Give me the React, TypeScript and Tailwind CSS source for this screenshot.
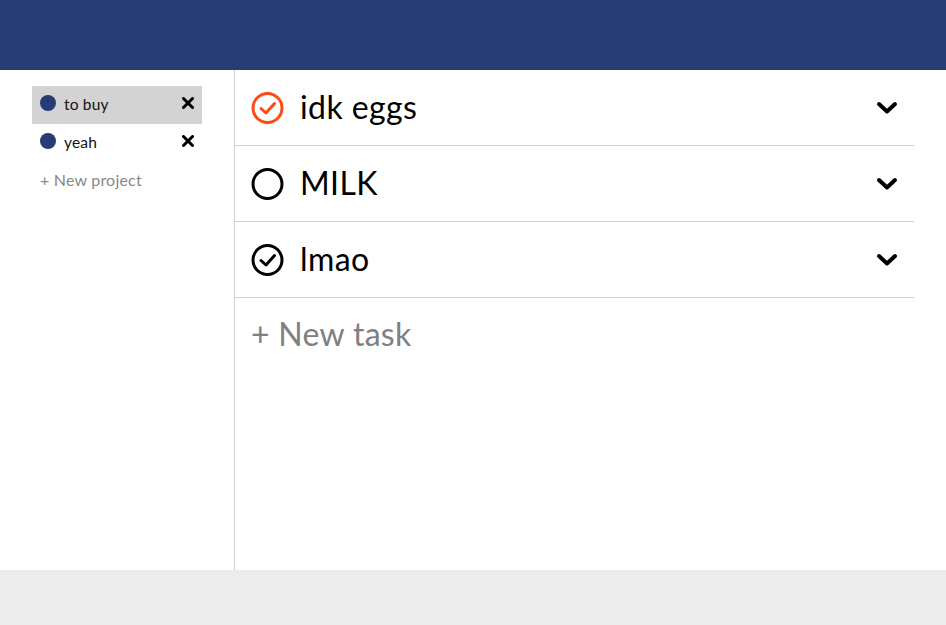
import React from 'react'

const CheckCircle = ({ color, checked }: { color: string; checked: boolean }) => (
  <svg width="34" height="34" viewBox="0 0 34 34" fill="none" stroke={color} strokeWidth="3" strokeLinecap="round" strokeLinejoin="round">
    <circle cx="16.5" cy="17" r="14.5" />
    {checked && <polyline points="10,17.5 15,22 23.5,12.5" />}
  </svg>
)

const Chevron = () => (
  <svg width="22" height="14" viewBox="0 0 22 14" fill="none" stroke="#000" strokeWidth="4" strokeLinecap="round" strokeLinejoin="round">
    <polyline points="3,3 11,10.5 19,3" />
  </svg>
)

const Close = () => (
  <svg width="12" height="12" viewBox="0 0 12 12" stroke="#000" strokeWidth="3" strokeLinecap="round">
    <line x1="1.5" y1="1.5" x2="10.5" y2="10.5" />
    <line x1="10.5" y1="1.5" x2="1.5" y2="10.5" />
  </svg>
)

const projects = [
  { name: 'to buy', active: true },
  { name: 'yeah', active: false },
]

const tasks = [
  { name: 'idk eggs', color: '#ff4a12', checked: true },
  { name: 'MILK', color: '#000', checked: false },
  { name: 'lmao', color: '#000', checked: true },
]

export default function App() {
  return (
    <div className="flex h-[625px] w-full flex-col bg-[#ececec] font-['Lato',sans-serif]">
      <header className="h-[70px] bg-[#273b74]" />
      <div className="flex h-[500px] bg-white">
        <aside className="w-[235px] border-r border-[#cfcfcf] pl-8 pr-8 pt-4">
          {projects.map((p) => (
            <div
              key={p.name}
              className={`flex h-[38px] items-center pl-2 pr-2 ${p.active ? 'bg-[#d3d3d3]' : ''}`}
            >
              <span className="-mt-1 h-[16px] w-[16px] rounded-full bg-[#273b74]" />
              <span className="ml-2 flex-1 text-[15.5px] tracking-[0.2px] text-[#111]">{p.name}</span>
              <span className="-mt-1">
                <Close />
              </span>
            </div>
          ))}
          <div className="mt-[6px] pl-2 text-[16px] tracking-[0.2px] text-[#888]">+ New project</div>
        </aside>
        <main className="w-[679px]">
          {tasks.map((t) => (
            <div key={t.name} className="flex h-[76px] items-center border-b border-[#d0d0d0] pl-4 pr-4">
              <CheckCircle color={t.color} checked={t.checked} />
              <span className="ml-[15px] -mt-[2px] flex-1 text-[32px] tracking-[0.4px] text-black">{t.name}</span>
              <Chevron />
            </div>
          ))}
          <div className="-mt-[2px] flex h-[76px] items-center pl-4 text-[32px] tracking-[0.3px] text-[#808080]">+ New task</div>
        </main>
      </div>
    </div>
  )
}
